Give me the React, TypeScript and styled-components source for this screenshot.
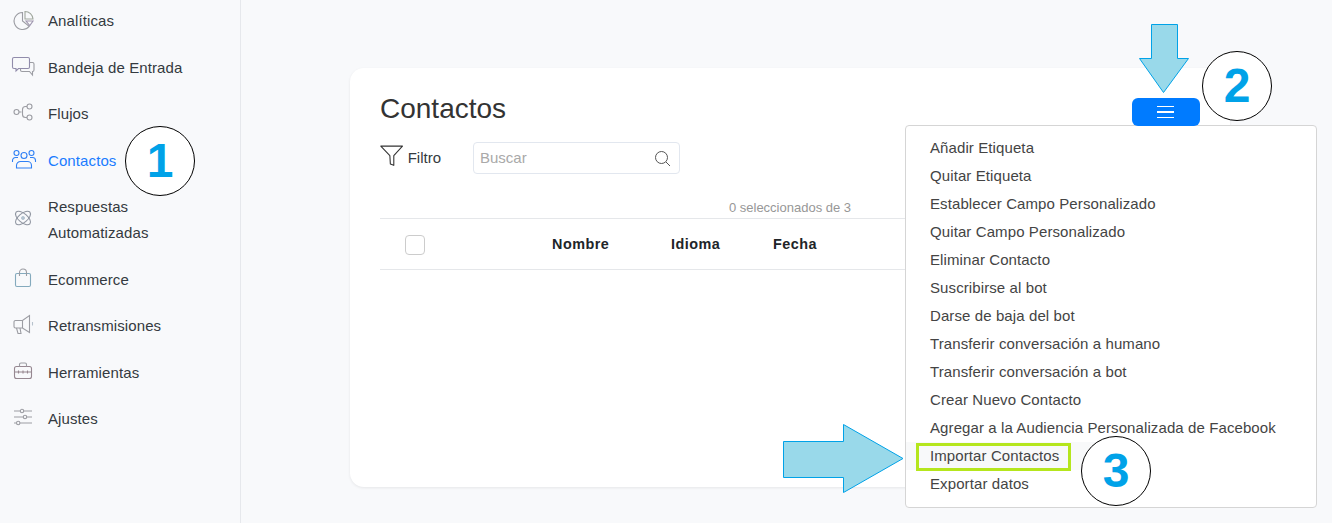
import styled, { createGlobalStyle } from "styled-components";

const GlobalStyle = createGlobalStyle`
  html, body {
    margin: 0;
    height: 523px;
    overflow: hidden;
    background: #f8f9fb;
    font-family: "Liberation Sans", Arial, sans-serif;
  }
`;

const AnalyticsIcon = () => (
  <svg width="28" height="24" viewBox="0 0 28 24" fill="none" stroke="#9c9da3" strokeWidth="1.100">
    <path d="M12.5 4.500a8.500 8.500 0 1 0 6.700 13.900L12.500 13z" />
    <path d="M15 3.500v7.500h8a8 8 0 0 0-8-7.500z" stroke="#a0a89e" />
    <path d="M16 13h7l-3.200 4.600z" stroke="#9f96ae" />
  </svg>
);

const InboxIcon = () => (
  <svg width="28" height="24" viewBox="0 0 28 24" fill="none" stroke="#918cab" strokeWidth="1.100">
    <path d="M4 3.500h14a1.500 1.500 0 0 1 1.500 1.500v8a1.500 1.500 0 0 1-1.500 1.500H8.500L6 17v-2.500H4A1.500 1.500 0 0 1 2.500 13V5A1.500 1.500 0 0 1 4 3.500z" />
    <path d="M20 8.500h2.500A1.500 1.500 0 0 1 24 10v6a1.500 1.500 0 0 1-1.500 1.500V21l-3-3.500H12A1.500 1.500 0 0 1 10.500 16v-1" stroke="#9c9da3" />
  </svg>
);

const FlowIcon = () => (
  <svg width="28" height="24" viewBox="0 0 28 24" fill="none" stroke="#9c9da3" strokeWidth="1.100">
    <circle cx="6.500" cy="12" r="2.500" />
    <circle cx="19.500" cy="6.500" r="2.500" />
    <circle cx="19.500" cy="17.500" r="2.500" />
    <path d="M9 12h2.500M17 6.500h-1.500a3 3 0 0 0-3 3v5a3 3 0 0 0 3 3H17" />
  </svg>
);

const ContactsIcon = () => (
  <svg width="28" height="24" viewBox="0 0 28 24" fill="none" stroke="#2f80f5" strokeWidth="1.100">
    <circle cx="14" cy="8.500" r="3" />
    <circle cx="6.500" cy="6" r="2.500" />
    <circle cx="21.500" cy="6" r="2.500" />
    <path d="M6.500 21v-2.500a4 4 0 0 1 4-4h7a4 4 0 0 1 4 4V21z" />
    <path d="M2.500 15v-1.500a3 3 0 0 1 3-3h2.500M25.500 15v-1.500a3 3 0 0 0-3-3H20" />
  </svg>
);

const AtomIcon = () => (
  <svg width="28" height="24" viewBox="0 0 28 24" fill="none" stroke="#8f95a0" strokeWidth="1.100">
    <ellipse cx="13" cy="12" rx="9" ry="4.500" transform="rotate(40 13 12)" />
    <ellipse cx="13" cy="12" rx="9" ry="4.500" transform="rotate(-40 13 12)" />
    <circle cx="13" cy="12" r="1.200" stroke="#8fa6b8" />
  </svg>
);

const BagIcon = () => (
  <svg width="28" height="24" viewBox="0 0 28 24" fill="none" stroke="#84aabd" strokeWidth="1.100">
    <rect x="5.500" y="7.500" width="15" height="13" rx="1.500" />
    <path d="M9.500 10V6.500a3.500 3.500 0 0 1 7 0V10" stroke="#9c9da3" />
  </svg>
);

const MegaphoneIcon = () => (
  <svg width="28" height="24" viewBox="0 0 28 24" fill="none" stroke="#9c9da3" strokeWidth="1.100">
    <path d="M5.500 8.500h7l7-5v17l-7-4.500h-7a1.500 1.500 0 0 1-1.500-1.500v-4.500a1.500 1.500 0 0 1 1.500-1.500z" />
    <path d="M6.500 16l1.500 5.500h3L10 16M12.500 8.500V16" />
    <path d="M22.500 10v3.500" stroke="#b6c2cc" />
  </svg>
);

const ToolboxIcon = () => (
  <svg width="28" height="24" viewBox="0 0 28 24" fill="none" stroke="#968790" strokeWidth="1.100">
    <rect x="4.500" y="7.500" width="17" height="12" rx="2" />
    <path d="M9.500 7.500V5.500a1.500 1.500 0 0 1 1.500-1.500h4a1.500 1.500 0 0 1 1.500 1.500v2" stroke="#9c9da3" />
    <path d="M4.500 13h17M8.500 11.500v3M17.500 11.500v3M13 11.500v3" />
  </svg>
);

const SlidersIcon = () => (
  <svg width="28" height="24" viewBox="0 0 28 24" fill="none" stroke="#9c9da3" strokeWidth="1.100">
    <path d="M4 6h6.500M13.500 6H22M4 12h9.500M16.500 12H22M4 18h2.500M10 18h12" />
    <circle cx="12" cy="6" r="1.700" />
    <circle cx="15" cy="12" r="1.700" />
    <circle cx="8.200" cy="18" r="1.700" />
  </svg>
);

const navItems = [
  { label: "Analíticas", icon: <AnalyticsIcon /> },
  { label: "Bandeja de Entrada", icon: <InboxIcon /> },
  { label: "Flujos", icon: <FlowIcon /> },
  { label: "Contactos", icon: <ContactsIcon />, active: true },
  { label: "Respuestas Automatizadas", icon: <AtomIcon /> },
  { label: "Ecommerce", icon: <BagIcon /> },
  { label: "Retransmisiones", icon: <MegaphoneIcon /> },
  { label: "Herramientas", icon: <ToolboxIcon /> },
  { label: "Ajustes", icon: <SlidersIcon /> },
];

const menuItems = [
  "Añadir Etiqueta",
  "Quitar Etiqueta",
  "Establecer Campo Personalizado",
  "Quitar Campo Personalizado",
  "Eliminar Contacto",
  "Suscribirse al bot",
  "Darse de baja del bot",
  "Transferir conversación a humano",
  "Transferir conversación a bot",
  "Crear Nuevo Contacto",
  "Agregar a la Audiencia Personalizada de Facebook",
  "Importar Contactos",
  "Exportar datos",
];

const App = () => {
  return (
    <Page>
      <GlobalStyle />
      <Sidebar>
        {navItems.map((item) => (
          <NavItem key={item.label} $active={item.active}>
            <NavIcon>{item.icon}</NavIcon>
            <NavLabel>{item.label}</NavLabel>
          </NavItem>
        ))}
      </Sidebar>
      <Main>
        <Card>
          <CardHeader>
            <Title>Contactos</Title>
          </CardHeader>
          <Toolbar>
            <FilterButton>
              <svg width="24" height="22" viewBox="0 0 24 22" fill="none" stroke="#333" strokeWidth="1.100">
                <path d="M.8 1h22L14 10.500v10l-3.500-1.500-.5-8.500z" strokeLinejoin="round" />
              </svg>
              <ToolbarText>Filtro</ToolbarText>
            </FilterButton>
            <SearchBox>
              <SearchPlaceholder>Buscar</SearchPlaceholder>
              <svg width="17" height="17" viewBox="0 0 17 17" fill="none" stroke="#555" strokeWidth="1">
                <circle cx="7.500" cy="7.500" r="6" />
                <path d="M12 12l4 4" />
              </svg>
            </SearchBox>
          </Toolbar>
          <SelectedCount>0 seleccionados de 3</SelectedCount>
          <TableHead>
            <Checkbox />
            <HeadCell $width={119}>Nombre</HeadCell>
            <HeadCell $width={102}>Idioma</HeadCell>
            <HeadCell $width={80}>Fecha</HeadCell>
          </TableHead>
        </Card>
      </Main>

      <Dropdown>
        {menuItems.map((item) => (
          <MenuItem key={item} $hover={item === "Importar Contactos"}>
            {item}
          </MenuItem>
        ))}
      </Dropdown>
      <MenuButton>
        <BurgerLine />
        <BurgerLine />
        <BurgerLine />
      </MenuButton>

      <Highlight />
      <ArrowSvg $left={1138} $top={23} width="52" height="71" viewBox="0 0 52 71">
        <polygon points="13.500,1.500 39.500,1.500 39.500,35.500 50.500,35.500 25.500,69.500 1.500,35.500 13.500,35.500" fill="#99d9ea" stroke="#00a2e8" />
      </ArrowSvg>
      <ArrowSvg $left={782} $top={423} width="123" height="71" viewBox="0 0 123 71">
        <polygon points="1.500,18.500 61.500,18.500 61.500,1.500 121,35.500 61.500,69.500 61.500,54.500 1.500,54.500" fill="#99d9ea" stroke="#00a2e8" />
      </ArrowSvg>
      <StepBadge $left={125} $top={126}>1</StepBadge>
      <StepBadge $left={1202} $top={51}>2</StepBadge>
      <StepBadge $left={1081} $top={436}>3</StepBadge>
    </Page>
  );
};

const Page = styled.div`
  position: relative;
  display: flex;
  width: 1332px;
  height: 523px;
  overflow: hidden;
  background: #f8f9fb;
  color: #333;
`;

const Sidebar = styled.nav`
  flex: 0 0 240px;
  box-sizing: content-box;
  height: 525px;
  margin-top: -1.700px;
  border-right: 1px solid #e6e8ec;
`;

const NavItem = styled.div<{ $active?: boolean }>`
  display: flex;
  align-items: center;
  padding: 10px 40px 10px 10px;
  font-size: 15px;
  letter-spacing: 0.1px;
  line-height: 26.4px;
  color: ${(p) => (p.$active ? "#1a7cff" : "#343a40")};
`;

const NavIcon = styled.span`
  display: flex;
  flex: 0 0 28px;
  margin: -2px 10px 2px 0;
`;

const NavLabel = styled.span``;

const Main = styled.main`
  flex: 1;
  padding: 68px 102px 0 109px;
`;

const Card = styled.section`
  box-sizing: border-box;
  height: 419px;
  padding: 21px 30px 0;
  background: #fff;
  border-radius: 14px;
  box-shadow: 0 1px 3px rgba(0, 0, 0, 0.08);
`;

const CardHeader = styled.div`
  height: 53px;
`;

const Title = styled.h1`
  margin: 0;
  font-size: 28px;
  font-weight: 400;
  line-height: 40px;
  color: #333;
`;

const MenuButton = styled.button`
  position: absolute;
  left: 1132px;
  top: 98px;
  display: flex;
  flex-direction: column;
  justify-content: center;
  align-items: center;
  gap: 4px;
  box-sizing: border-box;
  width: 68px;
  height: 28px;
  padding: 0 2px 0 0;
  border: 0;
  border-radius: 6px;
  background: #007bff;
`;

const BurgerLine = styled.span`
  display: block;
  width: 17px;
  height: 1.500px;
  background: #fff;
`;

const Toolbar = styled.div`
  display: flex;
  align-items: center;
  gap: 32px;
  height: 32px;
`;

const FilterButton = styled.div`
  display: flex;
  align-items: center;
  gap: 4px;
  width: 61px;
  font-size: 15px;
  color: #343a40;

  svg {
    margin-top: -4px;
  }
`;

const ToolbarText = styled.span`
  margin-bottom: 2px;
`;

const SearchBox = styled.div`
  box-sizing: border-box;
  display: flex;
  justify-content: space-between;
  align-items: center;
  width: 207px;
  height: 32px;
  padding: 0 8px 0 6px;
  border: 1px solid #e2e7ef;
  border-radius: 4px;
`;

const SearchPlaceholder = styled.span`
  margin-bottom: 2px;
  font-size: 15px;
  color: #a9a9a9;
`;

const SelectedCount = styled.div`
  height: 45px;
  padding-top: 26px;
  box-sizing: border-box;
  text-align: center;
  font-size: 13px;
  line-height: 15px;
  color: #979797;
  border-bottom: 1px solid #e5e7ea;
`;

const TableHead = styled.div`
  display: flex;
  align-items: center;
  height: 51px;
  padding-left: 25px;
  box-sizing: border-box;
  border-bottom: 1px solid #e5e7ea;
`;

const Checkbox = styled.span`
  box-sizing: border-box;
  flex: 0 0 20px;
  height: 20px;
  margin-right: 127px;
  margin-top: 2px;
  border: 1px solid #ccc;
  border-radius: 4px;
`;

const HeadCell = styled.span<{ $width: number }>`
  flex: 0 0 ${(p) => p.$width}px;
  font-size: 14.4px;
  font-weight: 700;
  letter-spacing: 0.5px;
  color: #212529;
`;

const Dropdown = styled.div`
  position: absolute;
  left: 905px;
  top: 125px;
  box-sizing: border-box;
  width: 412px;
  height: 383px;
  padding: 8px 0;
  background: #fff;
  border: 1px solid #d5d5d5;
  border-radius: 4px;
`;

const MenuItem = styled.div<{ $hover?: boolean }>`
  height: 28px;
  width: ${(p) => (p.$hover ? "162px" : "auto")};
  padding: 0 24px;
  font-size: 15px;
  letter-spacing: 0.1px;
  line-height: 28px;
  white-space: nowrap;
  color: #444;
  background: ${(p) => (p.$hover ? "#f8f9fa" : "transparent")};
`;

const Highlight = styled.div`
  position: absolute;
  left: 916px;
  top: 443px;
  box-sizing: border-box;
  width: 155px;
  height: 28px;
  border: 3px solid #b5e61d;
`;

const ArrowSvg = styled.svg<{ $left: number; $top: number }>`
  position: absolute;
  left: ${(p) => p.$left}px;
  top: ${(p) => p.$top}px;
`;

const StepBadge = styled.div<{ $left: number; $top: number }>`
  position: absolute;
  left: ${(p) => p.$left}px;
  top: ${(p) => p.$top}px;
  box-sizing: border-box;
  width: 70px;
  height: 70px;
  border: 1px solid #000;
  border-radius: 50%;
  background: #fff;
  text-align: center;
  font-size: 48px;
  font-weight: 700;
  line-height: 68px;
  color: #00a2e8;
`;

export default App;
